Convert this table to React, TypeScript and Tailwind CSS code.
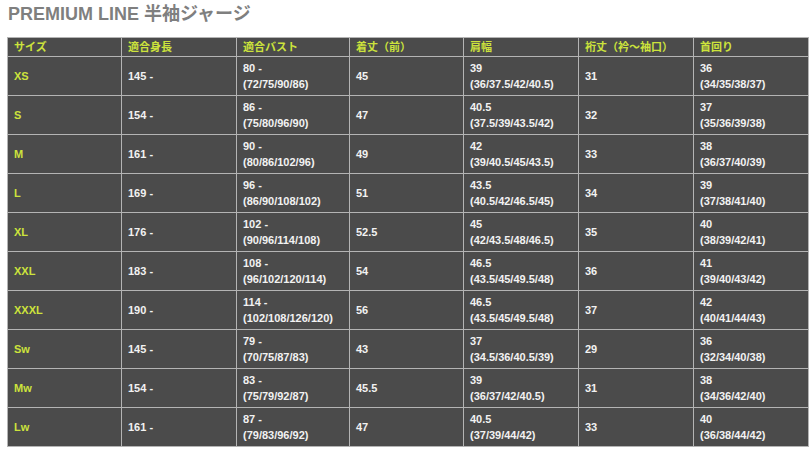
import React from "react";

const headers = ["サイズ", "適合身長", "適合バスト", "着丈（前）", "肩幅", "裄丈（衿～袖口）", "首回り"];

const rows: string[][][] = [
  [["XS"], ["145 -"], ["80 -", "(72/75/90/86)"], ["45"], ["39", "(36/37.5/42/40.5)"], ["31"], ["36", "(34/35/38/37)"]],
  [["S"], ["154 -"], ["86 -", "(75/80/96/90)"], ["47"], ["40.5", "(37.5/39/43.5/42)"], ["32"], ["37", "(35/36/39/38)"]],
  [["M"], ["161 -"], ["90 -", "(80/86/102/96)"], ["49"], ["42", "(39/40.5/45/43.5)"], ["33"], ["38", "(36/37/40/39)"]],
  [["L"], ["169 -"], ["96 -", "(86/90/108/102)"], ["51"], ["43.5", "(40.5/42/46.5/45)"], ["34"], ["39", "(37/38/41/40)"]],
  [["XL"], ["176 -"], ["102 -", "(90/96/114/108)"], ["52.5"], ["45", "(42/43.5/48/46.5)"], ["35"], ["40", "(38/39/42/41)"]],
  [["XXL"], ["183 -"], ["108 -", "(96/102/120/114)"], ["54"], ["46.5", "(43.5/45/49.5/48)"], ["36"], ["41", "(39/40/43/42)"]],
  [["XXXL"], ["190 -"], ["114 -", "(102/108/126/120)"], ["56"], ["46.5", "(43.5/45/49.5/48)"], ["37"], ["42", "(40/41/44/43)"]],
  [["Sw"], ["145 -"], ["79 -", "(70/75/87/83)"], ["43"], ["37", "(34.5/36/40.5/39)"], ["29"], ["36", "(32/34/40/38)"]],
  [["Mw"], ["154 -"], ["83 -", "(75/79/92/87)"], ["45.5"], ["39", "(36/37/42/40.5)"], ["31"], ["38", "(34/36/42/40)"]],
  [["Lw"], ["161 -"], ["87 -", "(79/83/96/92)"], ["47"], ["40.5", "(37/39/44/42)"], ["33"], ["40", "(36/38/44/42)"]],
];

const widths = ["w-[114px]", "w-[115px]", "w-[113px]", "w-[114px]", "w-[115px]", "w-[115px]", "w-[115px]"];

export default function App() {
  return (
    <div
      className="w-[810px] h-[450px] bg-white overflow-hidden"
      style={{ fontFamily: '"Liberation Sans", Arial, "Noto Sans CJK JP", sans-serif' }}
    >
      <div className="pl-[8px] pt-[2px] h-[37px] text-[18px] font-bold text-[#7f7f7f] leading-[24px]">
        PREMIUM LINE 半袖ジャージ
      </div>
      <table className="ml-[7px] w-[802px] table-fixed border-collapse bg-[#4b4b4b] text-[11px] font-bold leading-[16px]">
        <colgroup>
          {widths.map((w, i) => (
            <col key={i} className={w} />
          ))}
        </colgroup>
        <thead>
          <tr className="h-[19px]">
            {headers.map((h, i) => (
              <th
                key={i}
                className="border border-[#b4b4b4] pl-[6px] text-left align-middle font-bold text-[#cde33c] p-0"
              >
                {h}
              </th>
            ))}
          </tr>
        </thead>
        <tbody>
          {rows.map((r, ri) => (
            <tr key={ri} className="h-[39px]">
              {r.map((cell, ci) => (
                <td
                  key={ci}
                  className={`border border-[#b4b4b4] pl-[6px] py-0 align-middle ${
                    ci === 0 ? "text-[#cde33c]" : "text-[#f2f2f2]"
                  }`}
                >
                  {cell.map((l, li) => (
                    <div key={li}>{l}</div>
                  ))}
                </td>
              ))}
            </tr>
          ))}
        </tbody>
      </table>
    </div>
  );
}
